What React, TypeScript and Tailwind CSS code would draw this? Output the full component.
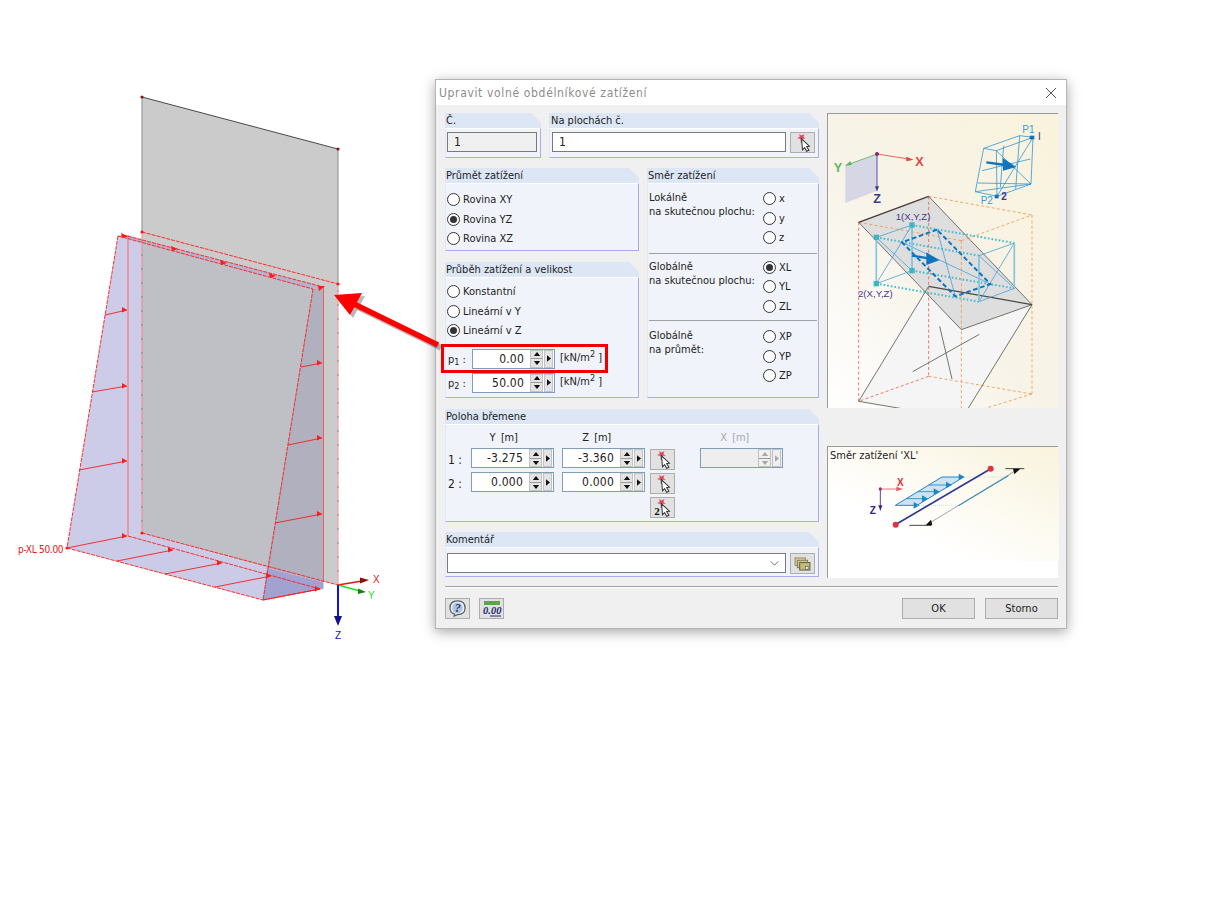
import React from "react";

const corner = "[clip-path:polygon(0_0,calc(100%-10px)_0,100%_10px,100%_100%,0_100%)]";

function Group({ title, className, bodyClass, titleClass, children }: { title: string; className: string; bodyClass?: string; titleClass?: string; children: React.ReactNode }) {
  return (
    <div className={"flex flex-col " + className}>
      <div className={"h-[15px] shrink-0 bg-[#dce6f4] text-[11px] leading-[15px] text-[#222] " + (titleClass ?? "pl-[1px] ") + " " + corner}>{title}</div>
      <div className={"flex-1 border-t border-t-white border-r border-b border-r-[#a9aeea] border-b-[#a9aeea] border-l border-l-[#e3e8f2] bg-[#f0f4fa] " + (bodyClass ?? "")}>{children}</div>
    </div>
  );
}

function Radio({ label, checked }: { label: string; checked?: boolean }) {
  return (
    <div className="flex h-[19.5px] items-center">
      <span className="flex h-[13px] w-[13px] shrink-0 items-center justify-center rounded-full border border-[#333] bg-white">
        {checked && <span className="h-[7px] w-[7px] rounded-full bg-[#333]" />}
      </span>
      <span className="ml-[3px] text-[11px] leading-none text-[#222]">{label}</span>
    </div>
  );
}

function Tri({ dir, color }: { dir: "up" | "down" | "right"; color: string }) {
  const p = dir === "up" ? "0,5 4,0 8,5" : dir === "down" ? "0,0 8,0 4,5" : "0,0 5,4 0,8";
  const s = dir === "right" ? "0 0 5 8" : "0 0 8 5";
  return (
    <svg viewBox={s} className={dir === "right" ? "h-[7px] w-[4px]" : "h-[4px] w-[8px]"}>
      <polygon points={p} fill={color} />
    </svg>
  );
}

function Spin({ value, disabled }: { value: string; disabled?: boolean }) {
  const c = disabled ? "#a8a8a8" : "#111";
  return (
    <div className={"flex h-[20px] w-[83px] items-center border border-[#7f9db9] pr-[1px] " + (disabled ? "bg-[#eeeeee]" : "bg-white")}>
      <span className="flex-1 pr-[6px] text-right text-[12px] tracking-[0.2px] text-[#222]">{value}</span>
      <span className={"flex h-[18px] w-[13px] flex-col items-center justify-center gap-[2px] border border-[#c2c2c2] " + (disabled ? "bg-[#efefef]" : "bg-[#e4e4e4]")}>
        <Tri dir="up" color={c} />
        <span className="h-px w-[11px] bg-[#9a9a9a]" />
        <Tri dir="down" color={c} />
      </span>
      <span className={"ml-[1px] flex h-[18px] w-[9px] items-center justify-center border border-[#c2c2c2] " + (disabled ? "bg-[#efefef]" : "bg-[#e4e4e4]")}>
        <Tri dir="right" color={c} />
      </span>
    </div>
  );
}

function PickIcon({ two }: { two?: boolean }) {
  return (
    <svg viewBox="0 0 25 21" className="h-[21px] w-[25px]">
      <polygon points="9,1 11,3 14.5,1.5 13.5,4.5 16,6.5 12.5,6.5 11,9.5 10,6.5 6.5,6 9.5,4.2" fill="#dc4a5e" />
      <line x1="11.5" y1="6" x2="11" y2="11" stroke="#7c7c7c" strokeWidth="1.2" />
      <polygon points="11.5,6.5 20,14.5 17,15 19.5,19 17,20 14.8,16 12.5,18.5" fill="#fff" stroke="#333" strokeWidth="1.1" />
      {two && <text x="3.5" y="18.5" fontFamily="'Liberation Serif',serif" fontWeight="700" fontSize="12" fill="#111">2</text>}
    </svg>
  );
}

function IconBtn({ children }: { children: React.ReactNode }) {
  return <div className="flex h-[21px] w-[25px] shrink-0 items-center justify-center border border-[#adadad] bg-[#e1e1e1]">{children}</div>;
}

function Pick({ two }: { two?: boolean }) {
  return <IconBtn><PickIcon two={two} /></IconBtn>;
}

function Scene() {
  const red = "#ff1a1a";
  const arrows: number[][] = [
    [105, 315, 127, 310], [92, 392, 127, 386], [79, 470, 127, 461],
    [301, 367, 322, 363], [288, 445, 322, 438], [275, 523, 322, 514],
    [67, 548, 127, 536], [117, 561, 173, 550], [165, 574, 222, 563], [215, 587, 271, 576], [263, 600, 320, 589],
  ];
  const heads: number[][] = [[123, 235, 128, 236.5], [173, 248, 178, 249], [222, 262, 227, 263], [271, 275, 276, 276], [320, 288, 325, 286]];
  return (
    <svg viewBox="0 0 436 660" className="absolute left-0 top-0 h-[660px] w-[436px]">
      <polygon points="142,97 338,149 338,585 142,533" fill="#cbcbcb" />
      <line x1="142" y1="97" x2="338" y2="149" stroke="#222" strokeWidth="0.8" />
      <line x1="142" y1="97" x2="142" y2="232" stroke="#9a9a9a" strokeWidth="1.2" />
      <line x1="338" y1="149" x2="338" y2="284" stroke="#9a9a9a" strokeWidth="1.2" />
      <circle cx="142" cy="97" r="1.6" fill="#7a1a1a" />
      <circle cx="338" cy="149" r="1.6" fill="#7a1a1a" />
      <polygon points="118,236 128,235 142,239 142,533 128,536 67,548" fill="#cccce8" />
      <polygon points="142,242.5 313,289 267,568 142,533" fill="#bfbfc6" />
      <polygon points="313,289 323.5,287 323.5,582 267,568" fill="#b0b0bf" />
      <polygon points="118,236 123,235 323.5,287 313,289" fill="#b4b4d0" />
      <polygon points="67,548 128,536 142,533 267,568 320,589 263,600" fill="#cbcbe8" />
      <polygon points="267,568 323.5,582 323.5,589 263,600" fill="#a2a2d0" />
      <line x1="128" y1="235" x2="128" y2="536" stroke="#f08a96" strokeWidth="1.6" />
      <line x1="142" y1="232" x2="142" y2="533" stroke="#f08a96" strokeWidth="1" />
      <line x1="142" y1="240" x2="142" y2="533" stroke="#7f8d99" strokeWidth="1" strokeDasharray="2 12" />
      <line x1="323.5" y1="287" x2="323.5" y2="582" stroke="#ef5a6a" strokeWidth="1" />
      <line x1="338" y1="284" x2="338" y2="585" stroke="#f4a0a8" strokeWidth="1.2" />
      <line x1="338" y1="290" x2="338" y2="585" stroke="#7f8d99" strokeWidth="1" strokeDasharray="2 12" />
      <g stroke={red} strokeWidth="0.9" strokeDasharray="4 1" fill="none">
        <line x1="118" y1="236" x2="67" y2="548" />
        <line x1="313" y1="289" x2="263" y2="600" />
        <line x1="118" y1="236" x2="313" y2="289" />
        <line x1="123" y1="235" x2="323.5" y2="287" />
        <line x1="142" y1="232" x2="338" y2="284" />
        <line x1="67" y1="548" x2="263" y2="600" />
        <line x1="128" y1="536" x2="320" y2="589" />
        <line x1="142" y1="533" x2="338" y2="585" />
        <line x1="263" y1="600" x2="320" y2="589" />
      </g>
      {arrows.map(([a, b, c, d], i) => (
        <g key={i}>
          <line x1={a} y1={b} x2={c} y2={d} stroke={red} strokeWidth="0.9" />
          <polygon points={`${c},${d} ${c - 5},${d - 3} ${c - 5},${d + 2.5}`} fill={red} />
        </g>
      ))}
      {heads.map(([a, b, c, d], i) => (
        <polygon key={i} points={`${c},${d} ${a - 2},${b - 2} ${a - 1},${b + 3}`} fill={red} />
      ))}
      <circle cx="142" cy="232" r="1.6" fill={red} />
      <circle cx="338" cy="284" r="1.6" fill={red} />
      <circle cx="142" cy="533" r="1.6" fill={red} />
      <circle cx="67" cy="548" r="1.6" fill={red} />
      <text x="18" y="552.5" fontFamily="'DejaVu Sans Condensed','Liberation Sans',sans-serif" fontSize="10" letterSpacing="-0.3" fill="#e02020">p-XL 50.00</text>
      <line x1="338" y1="585" x2="362" y2="581" stroke="#ee1111" strokeWidth="1.5" />
      <polygon points="369,580 360,577.5 360,583.5" fill="#8a1010" />
      <line x1="338" y1="585" x2="360" y2="591" stroke="#22dd22" strokeWidth="1.5" />
      <polygon points="366,592 358,588.5 358,594" fill="#158015" />
      <line x1="338" y1="585" x2="338" y2="618" stroke="#1010e0" strokeWidth="2" />
      <polygon points="338,626 334,616 342,616" fill="#10108a" />
      <text x="373" y="583" fontFamily="'Liberation Sans',sans-serif" fontSize="10" fill="#e02020">X</text>
      <text x="368" y="599" fontFamily="'Liberation Sans',sans-serif" fontSize="10" fill="#22dd22">Y</text>
      <text x="335" y="639" fontFamily="'Liberation Sans',sans-serif" fontSize="10" fill="#1010e0">Z</text>
    </svg>
  );
}

function BigArrow() {
  return (
    <svg viewBox="0 0 120 70" className="absolute left-[330px] top-[288px] h-[70px] w-[120px] overflow-visible">
      <g fill="#000" opacity="0.28" transform="translate(3 3)">
        <polygon points="4,7 32,5 20,27" />
        <line x1="24" y1="16" x2="108" y2="57" stroke="#000" strokeWidth="5.5" />
      </g>
      <polygon points="4,7 32,5 20,27" fill="#ff0000" />
      <line x1="24" y1="16" x2="108" y2="57" stroke="#ff0000" strokeWidth="5.5" />
    </svg>
  );
}

function MainPicture() {
  const teal = "#48bccb";
  const blue = "#3a9ad4";
  const strong = "#0f74bd";
  return (
    <svg viewBox="3 25 693 882" className="block h-[294px] w-[231px]">
      <defs>
        <linearGradient id="g1" x1="1" y1="0" x2="0" y2="1">
          <stop offset="0" stopColor="#f9f3dc" />
          <stop offset="0.55" stopColor="#f7f3e8" />
          <stop offset="1" stopColor="#ffffff" />
        </linearGradient>
      </defs>
      <rect x="3" y="25" width="693" height="882" fill="url(#g1)" />
      <polygon points="55,178 150,145 150,255 55,292" fill="#d6d6e4" />
      <line x1="150" y1="145" x2="245" y2="160" stroke="#e0483e" strokeWidth="2.5" />
      <polygon points="260,162 238,153 238,167" fill="#e0483e" />
      <line x1="150" y1="145" x2="65" y2="176" stroke="#5cb85c" strokeWidth="2.5" />
      <polygon points="54,180 70,166 74,178" fill="#5cb85c" />
      <line x1="150" y1="145" x2="150" y2="245" stroke="#3a3a8c" strokeWidth="2.5" />
      <polygon points="150,258 144,242 156,242" fill="#3a3a8c" />
      <circle cx="150" cy="145" r="6" fill="#7c2b6c" />
      <text x="265" y="180" fontFamily="'Liberation Sans',sans-serif" fontWeight="700" fontSize="38" fill="#e0483e">X</text>
      <text x="20" y="199" fontFamily="'Liberation Sans',sans-serif" fontWeight="700" fontSize="38" fill="#5cb85c">Y</text>
      <text x="139" y="291" fontFamily="'Liberation Sans',sans-serif" fontWeight="700" fontSize="38" fill="#3a3a8c">Z</text>

      <g stroke={blue} strokeWidth="2.5" fill="none">
        <polygon points="470,128 578,90 618,95 612,235 510,272 445,258" />
        <line x1="470" y1="128" x2="508" y2="135" />
        <line x1="508" y1="135" x2="618" y2="95" />
        <line x1="508" y1="135" x2="510" y2="272" />
        <line x1="508" y1="135" x2="612" y2="235" />
        <line x1="618" y1="95" x2="510" y2="272" />
        <line x1="452" y1="232" x2="612" y2="235" />
        <line x1="445" y1="258" x2="612" y2="235" />
        <line x1="530" y1="120" x2="520" y2="245" />
        <line x1="578" y1="90" x2="566" y2="250" />
        <line x1="465" y1="195" x2="610" y2="160" />
      </g>
      <line x1="478" y1="170" x2="535" y2="178" stroke={strong} strokeWidth="7" />
      <polygon points="568,184 528,158 528,195" fill={strong} />
      <rect x="608" y="90" width="14" height="11" fill={strong} />
      <rect x="503" y="267" width="12" height="11" fill={strong} />
      <text x="586" y="82" fontFamily="'Liberation Sans',sans-serif" fontSize="30" fill={blue}>P1</text>
      <text x="633" y="104" fontFamily="'Liberation Sans',sans-serif" fontSize="30" fill="#3a3a8c">I</text>
      <text x="461" y="294" fontFamily="'Liberation Sans',sans-serif" fontSize="30" fill={blue}>P2</text>
      <text x="523" y="284" fontFamily="'Liberation Sans',sans-serif" fontWeight="700" fontSize="30" fill="#3a3a8c">2</text>

      <polygon points="305,542 615,597 404,930 95,887" fill="#f5f5f5" />
      <polygon points="95,350 305,272 615,597 403,672" fill="#dedede" />
      <g stroke="#e8604c" strokeWidth="2.5" strokeDasharray="9 7" fill="none">
        <line x1="95" y1="350" x2="95" y2="887" />
        <line x1="305" y1="272" x2="305" y2="812" />
        <line x1="305" y1="812" x2="95" y2="887" />
      </g>
      <g stroke="#f0984a" strokeWidth="2.5" strokeDasharray="9 7" fill="none">
        <line x1="305" y1="272" x2="615" y2="328" />
        <line x1="615" y1="328" x2="615" y2="865" />
        <line x1="95" y1="350" x2="403" y2="405" />
        <line x1="403" y1="405" x2="403" y2="930" />
        <line x1="403" y1="405" x2="615" y2="328" />
        <line x1="305" y1="812" x2="615" y2="865" />
        <line x1="615" y1="865" x2="403" y2="930" />
      </g>
      <g stroke="#5a5a52" strokeWidth="2.5" fill="none">
        <line x1="305" y1="272" x2="615" y2="597" />
        <line x1="95" y1="350" x2="403" y2="672" />
        <line x1="403" y1="672" x2="615" y2="597" />
        <line x1="95" y1="887" x2="305" y2="542" />
        <line x1="615" y1="597" x2="410" y2="930" />
        <line x1="95" y1="887" x2="350" y2="930" />
        <line x1="338" y1="662" x2="375" y2="820" />
        <line x1="457" y1="686" x2="257" y2="798" />
      </g>
      <line x1="95" y1="350" x2="305" y2="272" stroke="#4a3a38" strokeWidth="4" />
      <line x1="305" y1="542" x2="615" y2="597" stroke="#4a4a44" strokeWidth="4" />
      <g stroke={teal} strokeWidth="6" strokeDasharray="5 6" fill="none">
        <line x1="255" y1="358" x2="562" y2="412" />
        <line x1="148" y1="395" x2="456" y2="450" />
        <line x1="255" y1="495" x2="562" y2="548" />
        <line x1="148" y1="534" x2="456" y2="588" />
      </g>
      <g stroke={blue} strokeWidth="2.2" fill="none">
        <polygon points="255,358 148,395 148,534 255,495" />
        <line x1="255" y1="358" x2="148" y2="534" />
        <line x1="148" y1="395" x2="255" y2="495" />
        <polygon points="562,412 456,450 456,588 562,548" />
        <line x1="562" y1="412" x2="456" y2="588" />
        <line x1="456" y1="450" x2="562" y2="548" />
        <line x1="225" y1="410" x2="490" y2="535" />
        <line x1="330" y1="372" x2="385" y2="572" />
      </g>
      <line x1="148" y1="395" x2="148" y2="534" stroke="#8bc8de" strokeWidth="5" />
      <line x1="255" y1="358" x2="255" y2="495" stroke="#8bc8de" strokeWidth="5" />
      <line x1="456" y1="450" x2="456" y2="588" stroke="#8bc8de" strokeWidth="5" />
      <line x1="562" y1="412" x2="562" y2="548" stroke="#8bc8de" strokeWidth="5" />
      {[[255, 358], [148, 395], [255, 495], [148, 534]].map(([x, y], i) => (
        <rect key={i} x={x - 8} y={y - 8} width="16" height="16" fill="#3db6c4" />
      ))}
      <polygon points="330,372 225,410 385,572 490,535" fill="none" stroke={strong} strokeWidth="6" strokeDasharray="14 8" />
      <line x1="255" y1="450" x2="305" y2="458" stroke={strong} strokeWidth="7" />
      <polygon points="337,464 298,440 298,478" fill={strong} />
      <text x="206" y="342" fontFamily="'Liberation Sans',sans-serif" fontSize="29" fill="#463a8c">1(X,Y,Z)</text>
      <text x="93" y="573" fontFamily="'Liberation Sans',sans-serif" fontSize="29" fill="#463a8c">2(X,Y,Z)</text>
    </svg>
  );
}

function SmallPicture() {
  const blue = "#1c86c8";
  return (
    <svg viewBox="3 22 693 342" className="block h-[114px] w-[231px]">
      <defs>
        <linearGradient id="g2" x1="1" y1="0" x2="0" y2="1">
          <stop offset="0" stopColor="#f9f3dc" />
          <stop offset="0.7" stopColor="#ffffff" />
          <stop offset="1" stopColor="#ffffff" />
        </linearGradient>
      </defs>
      <rect x="3" y="22" width="693" height="342" fill="url(#g2)" />
      <polygon points="205,197 345,112 410,112 270,197" fill="#cfe4f2" stroke={blue} strokeWidth="3" />
      <g stroke={blue} strokeWidth="2.5">
        <line x1="238" y1="177" x2="300" y2="177" />
        <line x1="272" y1="156" x2="335" y2="156" />
        <line x1="305" y1="136" x2="370" y2="136" />
      </g>
      {[[278, 197], [303, 177], [338, 156], [375, 136], [413, 112]].map(([x, y], i) => (
        <polygon key={i} points={`${x},${y} ${x - 18},${y - 10} ${x - 18},${y + 10}`} fill={blue} />
      ))}
      <line x1="410" y1="112" x2="540" y2="112" stroke="#a8d8de" strokeWidth="2" strokeDasharray="3 3" />
      <line x1="270" y1="197" x2="395" y2="197" stroke="#a8d8de" strokeWidth="2" strokeDasharray="3 3" />
      <line x1="205" y1="255" x2="490" y2="88" stroke="#2f3a90" strokeWidth="5" />
      <circle cx="206" cy="255" r="9" fill="#e0343c" />
      <circle cx="491" cy="87" r="9" fill="#e0343c" />
      <line x1="300" y1="255" x2="570" y2="90" stroke="#777" strokeWidth="2" />
      <line x1="395" y1="198" x2="545" y2="108" stroke={blue} strokeWidth="3" />
      <line x1="535" y1="87" x2="592" y2="87" stroke="#222" strokeWidth="2.5" />
      <line x1="247" y1="257" x2="312" y2="257" stroke="#222" strokeWidth="2.5" />
      <polygon points="562,104 558,87 580,87" fill="#111" />
      <polygon points="296,257 312,240 316,257" fill="#111" />
      <line x1="160" y1="148" x2="215" y2="148" stroke="#e85a66" strokeWidth="2.5" />
      <polygon points="228,148 208,141 208,155" fill="#e85a66" />
      <line x1="160" y1="148" x2="160" y2="202" stroke="#3a1f8c" strokeWidth="2.5" />
      <polygon points="160,214 154,197 166,197" fill="#3a1f8c" />
      <circle cx="160" cy="148" r="5" fill="#8c3a7c" />
      <text x="210" y="138" fontFamily="'Liberation Sans',sans-serif" fontWeight="700" fontSize="30" fill="#e0343c">X</text>
      <text x="128" y="224" fontFamily="'Liberation Sans',sans-serif" fontWeight="700" fontSize="30" fill="#3a1f8c">Z</text>
    </svg>
  );
}

const sections = [
  { a: "Lokálně", b: "na skutečnou plochu:", r: ["x", "y", "z"], c: -1, cls: "" },
  { a: "Globálně", b: "na skutečnou plochu:", r: ["XL", "YL", "ZL"], c: 0, cls: "mt-[5px] border-t border-t-[#a0a0a0] pt-[4px]" },
  { a: "Globálně", b: "na průmět:", r: ["XP", "YP", "ZP"], c: -1, cls: "mt-[4px] border-t border-t-[#a0a0a0] pt-[6px]" },
];

export default function App() {
  return (
    <div className="relative h-[915px] w-[1220px] overflow-hidden bg-white font-['DejaVu_Sans_Condensed','Liberation_Sans',sans-serif]">
      <Scene />
      <div className="absolute left-[435px] top-[79px] flex h-[550px] w-[632px] flex-col border border-[#b4b4b4] bg-[#f0f0f0] shadow-[0_3px_12px_rgba(0,0,0,0.35)]">
        <div className="flex h-[25px] shrink-0 items-center justify-between bg-white pl-[3px] pr-[9px]">
          <span className="text-[12px] tracking-[0.65px] text-[#8c8c8c]">Upravit volné obdélníkové zatížení</span>
          <svg viewBox="0 0 12 12" className="h-[12px] w-[12px]"><path d="M1 1 L11 11 M11 1 L1 11" stroke="#555" strokeWidth="1" /></svg>
        </div>
        <div className="flex flex-1 flex-col pl-[9px] pr-[8px]">
          <div className="flex flex-1">
            <div className="flex w-[374px] flex-col pt-[8px]">
              <div className="flex gap-[8px]">
                <Group title="Č." className="h-[45px] w-[96px]" bodyClass="pl-[1px] pt-[3px]">
                  <div className="flex h-[20px] w-[90px] items-center border border-[#7a7a7a] bg-[#f0f0f0] pl-[6px] text-[12px] text-[#222]">1</div>
                </Group>
                <Group title="Na plochách č." titleClass="pl-[2px]" className="h-[45px] w-[270px]" bodyClass="flex gap-[4px] pl-[2px] pt-[3px]">
                  <div className="flex h-[20px] w-[234px] items-center border border-[#7a7a7a] bg-white pl-[6px] text-[12px] text-[#222]">1</div>
                  <Pick />
                </Group>
              </div>
              <div className="mt-[10px] flex gap-[8px]">
                <div className="flex w-[194px] flex-col gap-[11px]">
                  <Group title="Průmět zatížení" className="h-[83px]" bodyClass="pl-[1px] pt-[6px]">
                    <Radio label="Rovina XY" />
                    <Radio label="Rovina YZ" checked />
                    <Radio label="Rovina XZ" />
                  </Group>
                  <Group title="Průběh zatížení a velikost" className="h-[136px]" bodyClass="pl-[1px] pt-[4px]">
                    <Radio label="Konstantní" />
                    <Radio label="Lineární v Y" />
                    <Radio label="Lineární v Z" checked />
                    <div className="mt-[8px] flex items-center">
                      <span className="w-[25px] pl-[1px] pt-[3px] text-[11px] text-[#222]">p<sub className="text-[9px]">1</sub> :</span>
                      <Spin value="0.00" />
                      <span className="ml-[5px] text-[11px] text-[#222]">[kN/m<sup className="text-[9px]">2</sup> ]</span>
                    </div>
                    <div className="mt-[4px] flex items-center">
                      <span className="w-[25px] pl-[1px] pt-[3px] text-[11px] text-[#222]">p<sub className="text-[9px]">2</sub> :</span>
                      <Spin value="50.00" />
                      <span className="ml-[5px] text-[11px] text-[#222]">[kN/m<sup className="text-[9px]">2</sup> ]</span>
                    </div>
                  </Group>
                </div>
                <Group title="Směr zatížení" className="h-[230px] w-[172px]" bodyClass="px-[1px] pt-[5px]">
                  {sections.map((s) => (
                    <div key={s.r[0]} className={s.cls}>
                      <div className="flex">
                        <div className="w-[114px] pt-[2px] text-[11px] leading-[14px] text-[#222]">
                          {s.a}
                          <br />
                          {s.b}
                        </div>
                        <div>
                          {s.r.map((l, j) => <Radio key={l} label={l} checked={s.c === j} />)}
                        </div>
                      </div>
                    </div>
                  ))}
                </Group>
              </div>
              <Group title="Poloha břemene" className="mt-[11px] h-[113px]" bodyClass="flex pl-[1px] pt-[3px]">
                <div className="w-[24px] pt-[20px] text-[12px] text-[#222]">
                  <div className="flex h-[24px] items-center pl-[1px]">1 :</div>
                  <div className="flex h-[24px] items-center pl-[1px]">2 :</div>
                </div>
                <div className="flex w-[83px] flex-col gap-[4px]">
                  <div className="h-[16px] pr-[18px] text-center text-[11px] leading-[20px] tracking-[-0.3px] text-[#222]">Y&nbsp; [m]</div>
                  <Spin value="-3.275" />
                  <Spin value="0.000" />
                </div>
                <div className="ml-[8px] flex w-[83px] flex-col gap-[4px]">
                  <div className="h-[16px] pr-[14px] text-center text-[11px] leading-[20px] tracking-[-0.3px] text-[#222]">Z&nbsp; [m]</div>
                  <Spin value="-3.360" />
                  <Spin value="0.000" />
                </div>
                <div className="ml-[5px] flex flex-col gap-[3px] pt-[21px]">
                  <Pick />
                  <Pick />
                  <Pick two />
                </div>
                <div className="ml-[25px] flex w-[83px] flex-col gap-[4px]">
                  <div className="h-[16px] pr-[14px] text-center text-[11px] leading-[20px] tracking-[-0.3px] text-[#a8a8a8]">X&nbsp; [m]</div>
                  <Spin value="" disabled />
                </div>
              </Group>
              <Group title="Komentář" className="mt-[10px] h-[45px]" bodyClass="flex gap-[4px] pl-[1px] pt-[5px]">
                <div className="flex h-[20px] w-[339px] items-center justify-end border border-[#7a7a7a] bg-white pr-[6px]">
                  <svg viewBox="0 0 10 6" className="h-[5px] w-[9px]"><path d="M0.5 0.5 L5 5 L9.5 0.5" fill="none" stroke="#555" strokeWidth="1" /></svg>
                </div>
                <IconBtn>
                  <svg viewBox="0 0 18 15" className="h-[14px] w-[17px]">
                    <rect x="1" y="1" width="11" height="8" fill="#d8cf98" stroke="#8a8a6a" />
                    <rect x="3.5" y="3.5" width="11" height="8" fill="#cfc68a" stroke="#7a7a5a" />
                    <rect x="6" y="6" width="11" height="8" fill="#c4b978" stroke="#5a5a4a" />
                    <rect x="12" y="10" width="3" height="3" fill="#fff" stroke="#444" strokeWidth="0.6" />
                  </svg>
                </IconBtn>
              </Group>
            </div>
            <div className="ml-[8px] flex w-[231px] flex-col pt-[8px]">
              <div className="h-[295px] border-t border-t-[#9a9a9a] border-l border-l-[#9a9a9a]">
                <MainPicture />
              </div>
              <div className="relative mt-[38px] h-[132px] border-t border-t-[#9a9a9a] border-l border-l-[#9a9a9a] bg-white">
                <SmallPicture />
                <span className="absolute left-[2px] top-[2px] text-[11px] leading-[14px] text-[#222]">Směr zatížení 'XL'</span>
              </div>
            </div>
          </div>
          <div className="mt-[8px] h-[2px] border-t border-t-[#a0a0a0] border-b border-b-white" />
          <div className="mb-[9px] mt-[10px] flex h-[21px] items-center gap-[9px]">
            <IconBtn>
              <svg viewBox="0 0 20 18" className="h-[17px] w-[19px]">
                <path d="M10 1 C15 1 18 4 18 8.5 C18 13 15 15.5 10 15.5 L6.5 17 L7 15 C3.5 14 2 11.5 2 8.5 C2 4 5 1 10 1 Z" fill="#e8eef4" stroke="#55606a" strokeWidth="1.3" />
                <circle cx="10" cy="8.5" r="5.5" fill="#aec4da" />
                <text x="7" y="13" fontFamily="'Liberation Serif',serif" fontWeight="700" fontStyle="italic" fontSize="13" fill="#1f3a8a">?</text>
              </svg>
            </IconBtn>
            <IconBtn>
              <svg viewBox="0 0 22 18" className="h-[18px] w-[22px]">
                <rect x="3" y="1" width="16" height="4" fill="#5aa845" />
                <text x="2" y="14" fontFamily="'Liberation Serif',serif" fontWeight="700" fontStyle="italic" fontSize="10.5" fill="#1f2a6a">0.00</text>
                <line x1="9" y1="16" x2="20" y2="16" stroke="#1f2a6a" strokeWidth="1" />
              </svg>
            </IconBtn>
            <div className="flex-1" />
            <div className="flex h-[21px] w-[73px] items-center justify-center border border-[#adadad] bg-[#e1e1e1] pt-[1px] text-[11px] text-[#222]">OK</div>
            <div className="ml-px flex h-[21px] w-[73px] items-center justify-center border border-[#adadad] bg-[#e1e1e1] pt-[1px] text-[11px] text-[#222]">Storno</div>
          </div>
        </div>
      </div>
      <BigArrow />
      <div className="absolute left-[441px] top-[344px] h-[29px] w-[167px] border-[3px] border-[#ee0000]" />
    </div>
  );
}
